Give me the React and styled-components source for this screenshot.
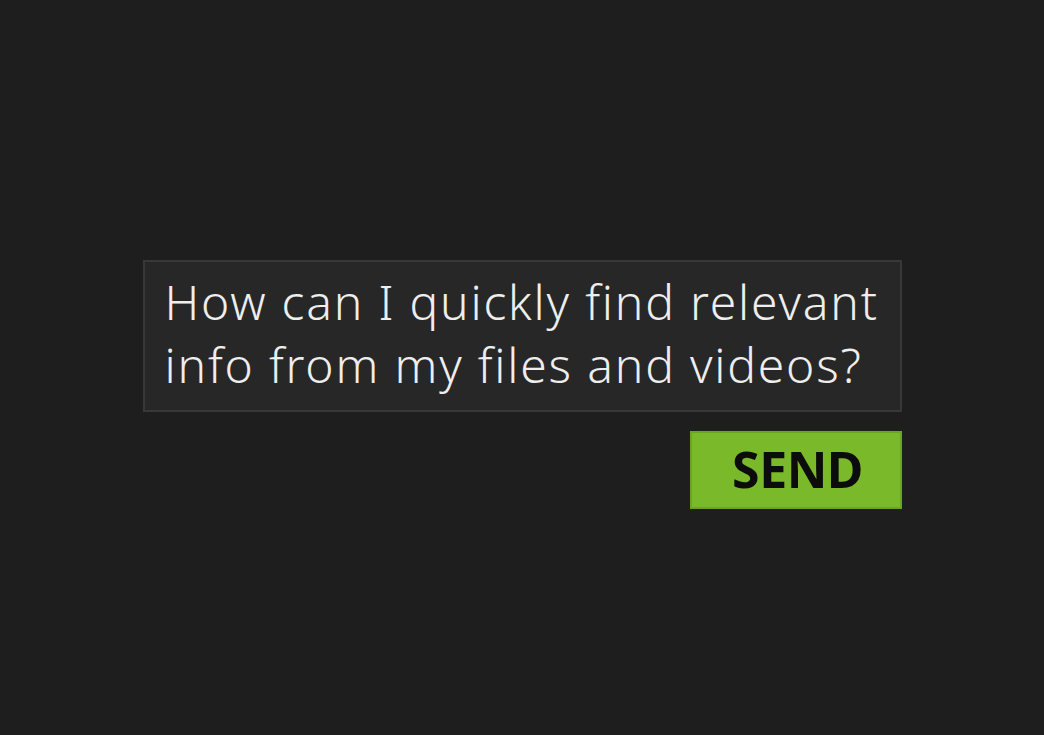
import React from 'react';
import styled, {createGlobalStyle} from 'styled-components';

const GlobalStyle = createGlobalStyle`
  html, body {
    margin: 0;
    padding: 0;
    background: #1e1e1e;
  }
  body {
    font-family: 'Noto Sans', 'Liberation Sans', sans-serif;
  }
`;

const Page = styled.main`
  min-height: 100vh;
  box-sizing: border-box;
  padding-top: 260px;
  display: flex;
  justify-content: center;
`;

const Composer = styled.div`
  width: 759px;
  display: flex;
  flex-direction: column;
  align-items: flex-end;
  gap: 19px;
`;

const Prompt = styled.div`
  box-sizing: border-box;
  width: 100%;
  height: 152px;
  padding: 8px 10px 0 20px;
  background: #272727;
  border: 2px solid #383838;
  color: #eeeeee;
  font-size: 48px;
  font-weight: 350;
  line-height: 63px;
  letter-spacing: 1.8px;
  white-space: nowrap;
`;

const SendButton = styled.button`
  box-sizing: border-box;
  width: 212px;
  height: 78px;
  border: 2px solid #6aa524;
  background: #7ab92a;
  color: #0c0c0c;
  font-family: 'Noto Sans', 'Liberation Sans', sans-serif;
  font-weight: 700;
  font-size: 50px;
  letter-spacing: -0.5px;
  padding: 0 0 2px 4px;
  cursor: pointer;
`;

const App = () => (
  <>
    <GlobalStyle />
    <Page>
      <Composer>
        <Prompt>
          How can I quickly find relevant<br />
          info from my files and videos?
        </Prompt>
        <SendButton>SEND</SendButton>
      </Composer>
    </Page>
  </>
);

export default App;
